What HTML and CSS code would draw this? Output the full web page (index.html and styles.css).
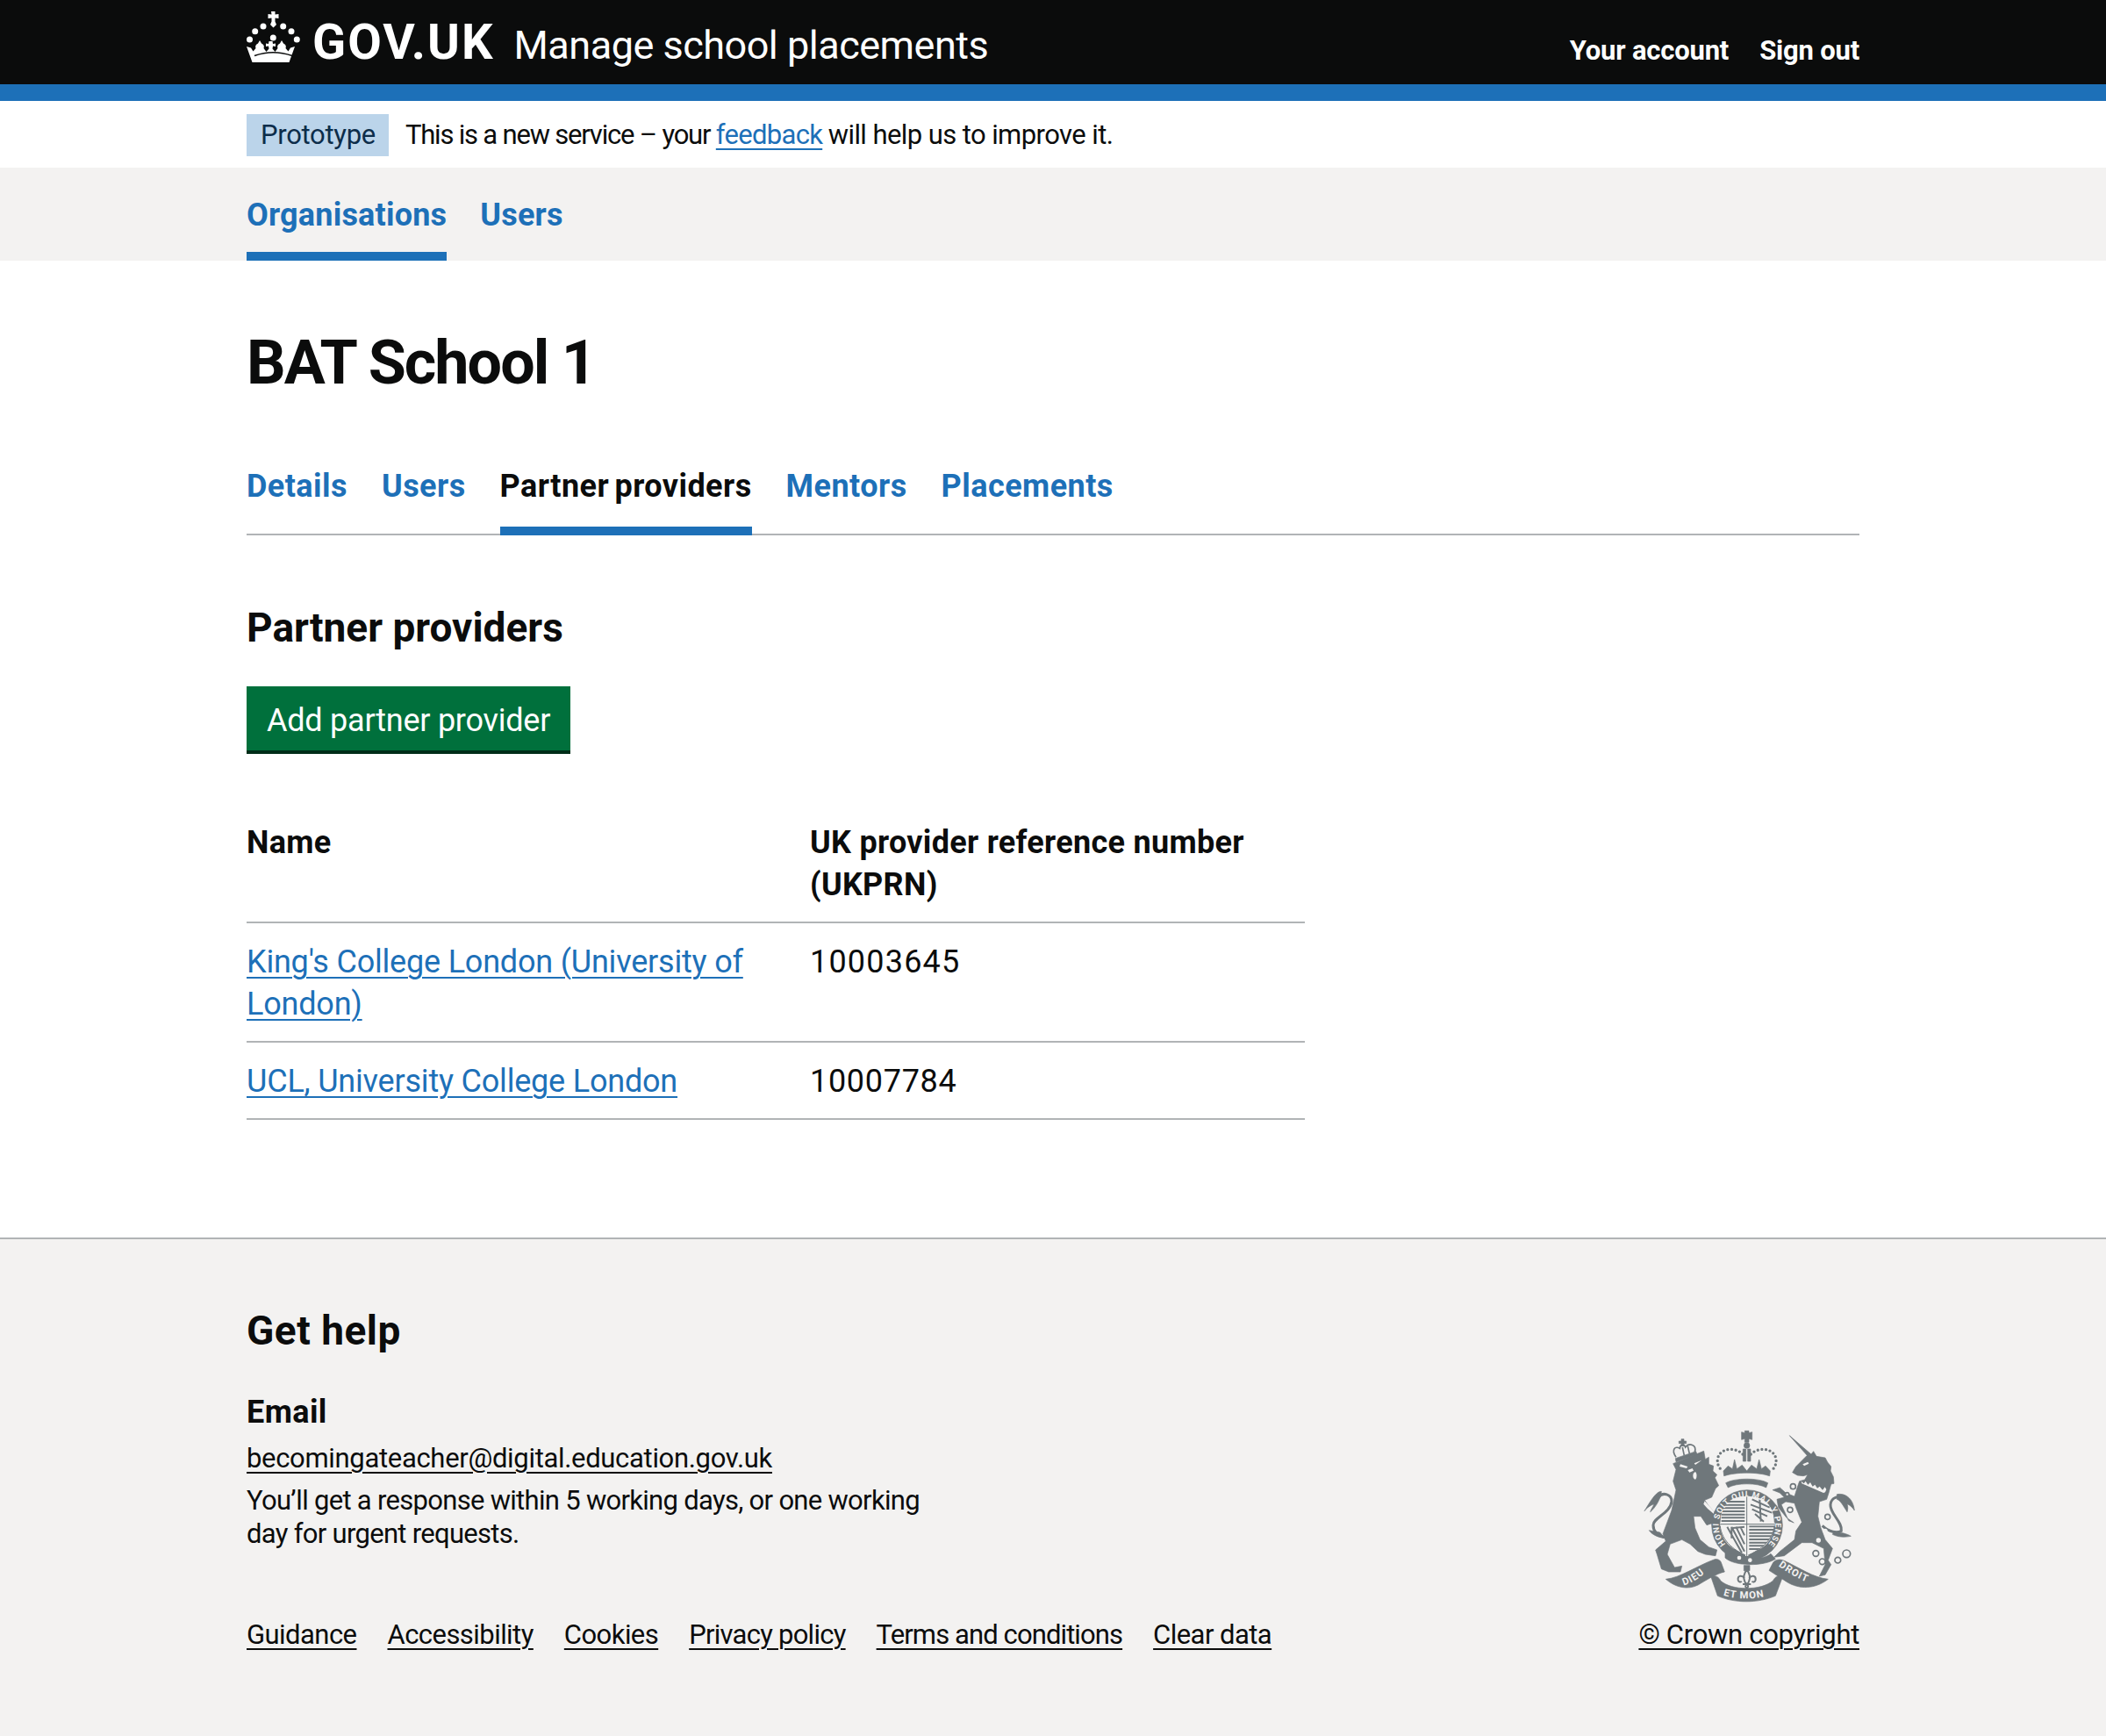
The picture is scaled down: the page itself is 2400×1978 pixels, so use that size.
FILE: index.html
```html
<!DOCTYPE html>
<html lang="en">
<head>
<meta charset="UTF-8">
<title>Partner providers</title>
<link rel="stylesheet" href="styles.css">
</head>
<body>
<header class="site-header">
  <div class="wrap site-header-row">
    <div class="brand">
      <svg class="crown" viewBox="0 0 62 58" aria-hidden="true">
        <path class="crown-fill" d="M28 0h4.500v3.500l4-.5v5l-4-.5v4l1.500 3.500-3.500 3.500-3.500-3.500 1.500-3.500v-4l-4 .5v-5l4 .5z"/>
        <circle class="crown-fill" cx="19" cy="17" r="3.500"/><circle class="crown-fill" cx="41.700" cy="17" r="3.500"/>
        <circle class="crown-fill" cx="9.700" cy="22.700" r="3.500"/><circle class="crown-fill" cx="51" cy="22.700" r="3.500"/>
        <circle class="crown-fill" cx="3.500" cy="32" r="3.500"/><circle class="crown-fill" cx="57.300" cy="32" r="3.500"/>
        <circle class="crown-fill" cx="30.300" cy="30" r="3.500"/>
        <path class="crown-fill" d="M0 40l5 1.500 2.500 4 3-3.500c-1-2.500 0-4.500 2.500-5.500l2-3.500 2 3.500c2.500 1 3.500 3 2.500 5.500l3 4 3-3.500-.5-3-3 .5v-3.500l3 .5 .5-3h4l.5 3 3-.5v3.500l-3-.5-.5 3 3 3.500 3-4c-1-2.500 0-4.500 2.500-5.500l2-3.500 2 3.500c2.500 1 3.500 3 2.500 5.500l3 3.500 2.500-4 5-1.500-6.500 18H6.500z"/>
        <path class="crown-cut" d="M9 50.500Q30 43 52 50.500"/>
      </svg>
      <span class="brand-word">GOV.UK</span>
      <span class="brand-service">Manage school placements</span>
    </div>
    <nav class="account-nav">
      <a href="#">Your account</a>
      <a href="#">Sign out</a>
    </nav>
  </div>
</header>
<div class="wrap phase">
  <strong class="phase-tag">Prototype</strong>
  <span class="phase-text">This is a new service – your <a class="link" href="#">feedback</a> <span class="phase-end">will help us to improve it.</span></span>
</div>
<nav class="primary-nav">
  <div class="wrap primary-nav-row">
    <a class="current" href="#">Organisations</a>
    <a href="#">Users</a>
  </div>
</nav>
<main class="wrap main">
  <h1>BAT School 1</h1>
  <nav class="sub-nav">
    <a href="#">Details</a>
    <a href="#">Users</a>
    <a class="current" href="#">Partner providers</a>
    <a href="#">Mentors</a>
    <a href="#">Placements</a>
  </nav>
  <h2>Partner providers</h2>
  <a class="button" href="#">Add partner provider</a>
  <table class="providers">
    <thead>
      <tr><th>Name</th><th>UK provider reference number (UKPRN)</th></tr>
    </thead>
    <tbody>
      <tr><td><a class="link" href="#">King's College London (University of London)</a></td><td class="num">10003645</td></tr>
      <tr><td><a class="link" href="#">UCL, University College London</a></td><td class="num">10007784</td></tr>
    </tbody>
  </table>
</main>
<footer class="footer">
  <div class="wrap">
    <h2 class="footer-title">Get help</h2>
    <div class="footer-row">
      <div class="footer-main">
        <h3>Email</h3>
        <p class="footer-mail"><a href="#">becomingateacher@digital.education.gov.uk</a></p>
        <p class="footer-note">You’ll get a response within 5 working days, or one working day for urgent requests.</p>
        <ul class="footer-links">
          <li><a href="#">Guidance</a></li>
          <li><a href="#">Accessibility</a></li>
          <li><a href="#">Cookies</a></li>
          <li><a href="#">Privacy policy</a></li>
          <li><a href="#">Terms and conditions</a></li>
          <li><a href="#">Clear data</a></li>
        </ul>
      </div>
      <div class="footer-meta">
        <svg class="arms" viewBox="-30 -30 807 690" aria-hidden="true">
          <defs>
            <path id="garter-path" d="M320 415A97 97 0 1 1 454 426"/>
            <path id="ribbon-left" d="M176 556C210 548 245 520 275 490"/>
            <path id="ribbon-mid" d="M306 588C350 606 430 606 478 586"/>
            <path id="ribbon-right" d="M500 490C535 515 575 540 622 553"/>
            <clipPath id="shield-clip">
              <path d="M392 250C440 250 485 270 487 340C487 400 440 435 392 455C345 435 300 400 300 340C302 270 345 250 392 250z"/>
            </clipPath>
          </defs>
          <!-- lion -->
          <g class="arms-fill">
            <path d="M140 140L245 97L250 125L262 118L262 142L278 148L276 165L290 178L283 188L296 215L285 225L272 255L248 265L262 285L285 310L305 345L300 365L270 345L255 350L235 320L210 320L215 360L232 400L262 425L290 435L285 455L250 450L225 440L198 415L170 400L130 415L120 450L145 495L170 490L165 510L125 510L100 500L85 450L80 435L115 405L105 380L135 300L150 230L140 200L150 160z"/>
            <path d="M100 235C85 235 70 255 42 302C55 285 70 280 75 278C70 290 65 295 62 305C80 290 90 270 98 250z"/>
            <path d="M112 395C90 392 70 385 58 368C75 372 85 372 95 375z"/>
            <path d="M148 122L218 98L222 108L150 134z"/>
          </g>
          <path class="arms-line" d="M110 392C85 385 72 372 72 350C72 325 130 310 135 270C136 245 105 235 90 255"/>
          <g class="arms-cut">
            <path d="M165 142l25 8-4 6-24-6zM238 128l-22 16-4-5z"/>
            <path d="M216 168c6 5 6 22 0 26-5 0-8-6-8-13 0-7 3-11 8-13z"/>
            <path d="M190 162l16-6 4 8-14 6z"/>
            <path d="M248 268l42 46 8 14-40-34-14-16z"/>
          </g>
          <!-- lion's crown -->
          <path class="arms-wire" d="M150 118C132 92 148 78 163 88C164 74 178 72 182 84C194 68 222 74 214 100"/>
          <path class="arms-wire" d="M172 84L178 112M190 80L196 106"/>
          <path class="arms-fill" d="M168 56h9v7h8v8h-8v9h-9v-9h-8v-8h8z"/>
          <!-- unicorn -->
          <g class="arms-fill">
            <path d="M538 44L612 108L620 98L630 115L660 120L668 135L680 150L678 165L688 185L690 208L680 210L672 240L665 262L640 270L635 320L645 360L660 400L685 430L670 470L680 485L660 520L640 525L660 485L655 430L615 410L580 410L520 455L485 460L505 440L555 400L560 370L580 340L560 290L555 275L525 270L510 280L535 335L553 342L528 325L500 290L495 262L520 255L505 240L480 230L505 222L525 240L555 252L565 220L572 200L590 195L600 178L585 182L565 180L548 170L560 150L575 135L598 112z"/>
            <path d="M700 245C725 240 755 255 760 300C750 285 740 280 735 278C738 288 738 295 735 305C722 285 712 265 700 262z"/>
            <path d="M690 372C715 375 735 380 748 388C728 392 705 392 685 382z"/>
          </g>
          <path class="arms-line" d="M650 352C675 375 700 378 715 370C720 340 675 310 678 280C680 255 710 245 725 262"/>
          <g class="arms-cut">
            <path d="M578 200l9 8 6-8 8 12 8-8 8 14 8-6 8 12 8-6 10 12 8-10 5 8-4 10-6 2-74-32z"/>
            <path d="M583 142l18-8 3 6-16 8z"/>
            <circle cx="637" cy="402" r="8"/><circle cx="660" cy="370" r="8"/>
          </g>
          <g class="arms-ring">
            <circle cx="628" cy="447" r="10"/><circle cx="650" cy="475" r="10"/>
            <circle cx="703" cy="470" r="10"/><circle cx="733" cy="448" r="13"/>
            <circle cx="668" cy="322" r="9"/><circle cx="550" cy="218" r="9"/><circle cx="530" cy="245" r="6"/>
            <circle cx="540" cy="298" r="9"/>
          </g>
          <!-- royal crown -->
          <g class="arms-fill">
            <path d="M385 28h14v7l11-3v26l-11-3v12h-14v-12l-11 3v-26l11 3z"/>
            <circle cx="392" cy="78" r="10"/>
            <path d="M379 90h10v42h-10zM395 90h10v42h-10z"/>
            <path d="M312 165L328 148L343 158L350 126L358 158L376 145L392 165L408 145L426 158L434 126L442 158L456 148L472 165L470 182C430 168 355 168 314 182z"/>
            <path d="M320 206C350 188 434 188 464 206L458 222C430 205 355 205 328 222z"/>
          </g>
          <path class="arms-dots" d="M378 108C355 82 298 85 292 125C290 145 300 158 310 166M406 108C430 82 486 85 492 125C494 145 484 158 474 166"/>
          <!-- garter and shield -->
          <circle class="arms-fill" cx="393" cy="351" r="121"/>
          <circle class="arms-bg" cx="393" cy="351" r="92"/>
          <path class="arms-shield" d="M392 250C440 250 485 270 487 340C487 400 440 435 392 455C345 435 300 400 300 340C302 270 345 250 392 250z"/>
          <g class="arms-bars" clip-path="url(#shield-clip)">
            <path d="M305 270H385M305 281H385M305 292H385M305 303H385M305 314H385M305 325H385M305 336H385"/>
            <path d="M400 355H490M400 366H490M400 377H490M400 388H490M400 399H490M400 410H490M400 421H490M400 432H490"/>
            <path d="M410 262L470 290M405 280L478 308M410 296L462 320M420 312L450 338M436 262L440 338"/>
            <path d="M340 356L384 440M355 356L384 415M370 356L384 385M340 356L340 395M345 360L384 356M325 356L375 445"/>
          </g>
          <path class="arms-cross" d="M392 248V456M300 347H488"/>
          <path class="arms-cross-line" d="M392 248V456M300 347H488"/>
          <text class="arms-garter"><textPath href="#garter-path">HONI SOIT QUI MAL Y PENSE</textPath></text>
          <path class="arms-fill" d="M318 430C340 460 440 478 474 448L490 466C450 492 350 492 318 462z"/>
          <circle class="arms-bg" cx="366" cy="462" r="7"/><circle class="arms-bg" cx="403" cy="470" r="7"/>
          <!-- fleur and motto -->
          <path class="arms-fill" d="M382 488H402V506H382z"/>
          <path class="arms-fleur" d="M392 502C402 516 406 526 400 540L396 550H388L384 540C378 526 382 516 392 502zM400 532C408 520 424 522 422 538C420 546 412 546 410 542M384 532C376 520 360 522 362 538C364 546 372 546 374 542M378 552H406M392 552C398 558 398 562 392 566C386 562 386 558 392 552"/>
          <g class="arms-fill">
            <path d="M115 535C165 530 220 490 280 468C292 464 302 470 305 480L316 510C290 515 250 540 225 555C190 572 150 565 115 535z"/>
            <path d="M270 528C283 518 297 528 302 540C340 575 440 575 482 540C487 528 500 518 514 528L490 592C430 618 350 618 292 592z"/>
            <path d="M468 505L482 478C490 468 505 465 520 472C570 495 620 530 670 535C625 570 570 570 530 545z"/>
          </g>
          <text class="arms-motto"><textPath href="#ribbon-left">DIEU</textPath></text>
          <text class="arms-motto"><textPath href="#ribbon-mid" startOffset="6">ET MON</textPath></text>
          <text class="arms-motto"><textPath href="#ribbon-right">DROIT</textPath></text>
        </svg>
        <a class="copyright" href="#">© Crown copyright</a>
      </div>
    </div>
  </div>
</footer>
</body>
</html>
```

FILE: styles.css
```css
* {
    box-sizing: border-box;
}

body {
    margin: 0;
    font-family: Roboto, Arial, sans-serif;
    font-size: 36px;
    line-height: 48px;
    color: #0b0c0c;
    background: #fff;
}

a {
    color: inherit;
    text-underline-offset: 5px;
    text-decoration-thickness: 2px;
}

.wrap {
    width: 1838px;
    margin: 0 auto;
}

.link {
    color: #1d70b8;
}

/* header */
.site-header {
    height: 115px;
    background: #0b0c0c;
    border-bottom: 19px solid #1d70b8;
    color: #fff;
}

.site-header-row {
    display: flex;
    justify-content: space-between;
    height: 96px;
}

.brand {
    display: flex;
    align-items: center;
    height: 96px;
}

.crown {
    width: 62px;
    height: 58px;
    margin-top: -12px;
}

.crown-fill {
    fill: #fff;
}

.crown-cut {
    fill: none;
    stroke: #0b0c0c;
    stroke-width: 1.5;
}

.brand-word {
    margin-left: 13px;
    font-size: 56px;
    font-weight: 700;
    letter-spacing: 2px;
}

.brand-service {
    margin-left: 22px;
    margin-top: 7px;
    font-size: 45px;
    letter-spacing: -0.500px;
}

.account-nav {
    display: flex;
    gap: 35px;
    padding-top: 34px;
    font-size: 31px;
    font-weight: 700;
    letter-spacing: -0.200px;
}

.account-nav a {
    text-decoration: none;
}

/* phase banner */
.phase {
    display: flex;
    align-items: center;
    gap: 19px;
    height: 76px;
    padding-top: 2px;
    font-size: 31px;
}

.phase-text {
    letter-spacing: -1.200px;
}

.phase-text .link {
    letter-spacing: -0.700px;
}

.phase-end {
    letter-spacing: -0.580px;
}

.phase-tag {
    padding: 0 15px 0 16px;
    height: 48px;
    line-height: 48px;
    background: #bbd4ea;
    color: #0c2d4a;
    font-weight: 400;
    letter-spacing: -0.300px;
}

/* primary nav */
.primary-nav {
    height: 106px;
    background: #f3f2f1;
}

.primary-nav-row {
    display: flex;
    gap: 38px;
    height: 106px;
}

.primary-nav a {
    padding-top: 30px;
    color: #1d70b8;
    font-weight: 700;
    text-decoration: none;
    letter-spacing: 0.200px;
}

.primary-nav a.current {
    border-bottom: 10px solid #1d70b8;
}

/* main */
.main {
    padding-top: 71px;
    height: 1113px;
}

h1 {
    margin: 0 0 66px;
    font-size: 70px;
    line-height: 90px;
    letter-spacing: -1.950px;
}

.sub-nav {
    display: flex;
    gap: 39px;
    height: 86px;
    border-bottom: 2px solid #b1b4b6;
    font-weight: 700;
    letter-spacing: 0.450px;
    word-spacing: -3px;
}

.sub-nav a {
    height: 86px;
    padding-top: 6px;
    color: #1d70b8;
    text-decoration: none;
}

.sub-nav a.current {
    color: #0b0c0c;
    border-bottom: 10px solid #1d70b8;
}

h2 {
    margin: 77px 0 39px;
    font-size: 46px;
    line-height: 56px;
}

.button {
    display: block;
    width: fit-content;
    height: 77px;
    padding: 15px 23px 0;
    background: #00703c;
    border-bottom: 4px solid #002d18;
    color: #fff;
    text-decoration: none;
    letter-spacing: -0.240px;
}

.providers {
    width: 1206px;
    margin-top: 57px;
    border-collapse: collapse;
    table-layout: fixed;
}

.providers th,
.providers td {
    padding: 20px 40px 18px 0;
    border-bottom: 2px solid #b1b4b6;
    text-align: left;
    vertical-align: top;
}

.providers th {
    letter-spacing: 0.300px;
}

.providers td {
    letter-spacing: -0.200px;
}

.providers th:first-child {
    width: 642px;
}

.providers .num {
    letter-spacing: 1.200px;
}

.providers tr:last-child .num {
    letter-spacing: 0.700px;
}

/* footer */
.footer {
    height: 568px;
    padding-top: 76px;
    background: #f3f2f1;
    border-top: 2px solid #b1b4b6;
}

.footer-title {
    margin: 0;
    line-height: 56px;
    letter-spacing: 0.500px;
}

.footer-row {
    display: flex;
    justify-content: space-between;
    align-items: flex-end;
}

.footer-main {
    width: 1300px;
}

.footer-main h3 {
    margin: 41px 0 0;
    font-size: 36px;
    line-height: 48px;
    letter-spacing: 0.400px;
}

.footer-mail,
.footer-note {
    margin: 0;
    font-size: 31px;
    line-height: 38px;
}

.footer-mail {
    margin-top: 10px;
    letter-spacing: -0.320px;
}

.footer-note {
    width: 790px;
    margin-top: 10px;
    letter-spacing: -0.700px;
}

.footer-links {
    display: flex;
    gap: 35px;
    margin: 77px 0 0;
    padding: 0;
    list-style: none;
    font-size: 31px;
    line-height: 38px;
    letter-spacing: -0.550px;
}

.footer-links li:nth-child(4) {
    letter-spacing: -0.750px;
}

.footer-links li:nth-child(5) {
    letter-spacing: -0.900px;
}

.footer-meta {
    display: flex;
    flex-direction: column;
    align-items: flex-end;
    font-size: 31px;
    line-height: 38px;
}

.copyright {
    letter-spacing: -0.300px;
}

/* royal arms */
.arms {
    width: 269px;
    height: 230px;
    margin-bottom: 3px;
}

.arms-fill {
    fill: #6f777b;
    stroke: #6f777b;
    stroke-width: 2;
    stroke-linejoin: round;
}

.arms-bg,
.arms-cut {
    fill: #f3f2f1;
}

.arms-line {
    fill: none;
    stroke: #6f777b;
    stroke-width: 9;
}

.arms-wire {
    fill: none;
    stroke: #6f777b;
    stroke-width: 5;
}

.arms-ring {
    fill: #f3f2f1;
    stroke: #6f777b;
    stroke-width: 5;
}

.arms-dots {
    fill: none;
    stroke: #6f777b;
    stroke-width: 10;
    stroke-linecap: round;
    stroke-dasharray: 0 14;
}

.arms-shield {
    fill: #f3f2f1;
    stroke: #6f777b;
    stroke-width: 3;
}

.arms-bars {
    fill: none;
    stroke: #6f777b;
    stroke-width: 6;
}

.arms-cross {
    fill: none;
    stroke: #f3f2f1;
    stroke-width: 10;
}

.arms-cross-line {
    fill: none;
    stroke: #6f777b;
    stroke-width: 3;
}

.arms-fleur {
    fill: #f3f2f1;
    stroke: #6f777b;
    stroke-width: 6;
    stroke-linejoin: round;
}

.arms-garter,
.arms-motto {
    fill: #f3f2f1;
    font-family: Roboto, Arial, sans-serif;
    font-weight: 700;
    letter-spacing: 3px;
}

.arms-garter {
    font-size: 28px;
}

.arms-motto {
    font-size: 34px;
}
```
